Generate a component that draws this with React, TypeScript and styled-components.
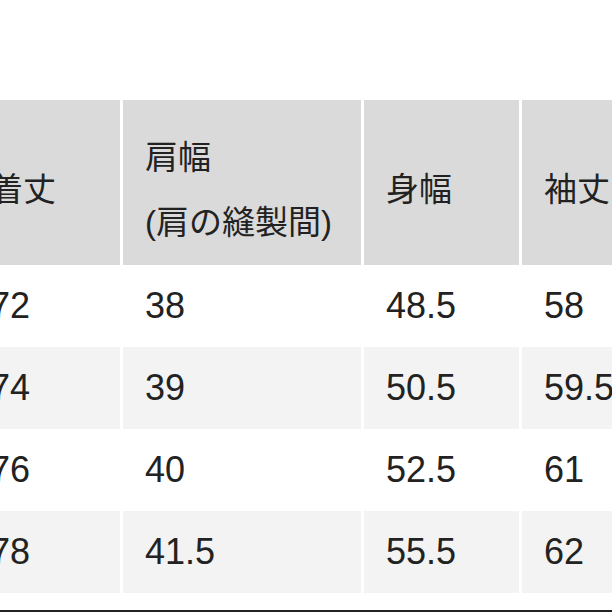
import React from 'react';
import styled, { createGlobalStyle } from 'styled-components';

const GlobalStyle = createGlobalStyle`
    html, body {
        margin: 0;
        padding: 0;
        background: #ffffff;
        overflow: hidden;
    }
`;

interface IRow {
    values: string[];
}

const headers: string[][] = [["着丈"], ["肩幅", "(肩の縫製間)"], ["身幅"], ["袖丈"]];

const rows: IRow[] = [
    { values: ["72", "38", "48.5", "58"] },
    { values: ["74", "39", "50.5", "59.5"] },
    { values: ["76", "40", "52.5", "61"] },
    { values: ["78", "41.5", "55.5", "62"] },
];

const App: React.FC = () => {
    return (
        <>
            <GlobalStyle />
            <Page>
                <SizeTable>
                    <HeaderRow>
                        {headers.map((lines, i) => (
                            <HeaderCell key={i}>
                                {lines.map((l) => <HeaderLine key={l}>{l}</HeaderLine>)}
                            </HeaderCell>
                        ))}
                    </HeaderRow>
                    {rows.map((row, i) => (
                        <DataRow key={i}>
                            {row.values.map((v, j) => (
                                <DataCell key={j} $shaded={i % 2 === 1}>{v}</DataCell>
                            ))}
                        </DataRow>
                    ))}
                </SizeTable>
                <BottomRule />
            </Page>
        </>
    );
};

const Page = styled.div`
    width: 612px;
    height: 612px;
    overflow: hidden;
    padding-top: 100px;
    box-sizing: border-box;
    display: flex;
    flex-direction: column;
    font-family: "Liberation Sans", "Noto Sans CJK JP", sans-serif;
    color: #222222;
`;

const SizeTable = styled.div`
    margin-left: -32px;
    display: flex;
    flex-direction: column;
`;

const Row = styled.div`
    display: grid;
    grid-template-columns: 152px 238px 155px 200px;
    column-gap: 3px;
`;

const HeaderRow = styled(Row)`
    height: 165px;
`;

const DataRow = styled(Row)`
    height: 82px;
`;

const HeaderCell = styled.div`
    background: #dadada;
    padding: 14px 0 0 22px;
    display: flex;
    flex-direction: column;
    justify-content: center;
    white-space: nowrap;
`;

const HeaderLine = styled.div`
    font-size: 33px;
    line-height: 65px;
`;

const DataCell = styled.div<{ $shaded: boolean }>`
    background: ${(p) => (p.$shaded ? '#f3f3f3' : '#ffffff')};
    padding-left: 22px;
    display: flex;
    align-items: center;
    font-size: 36px;
    white-space: nowrap;
`;

const BottomRule = styled.div`
    margin-top: auto;
    height: 2px;
    background: #222222;
`;

export default App;
